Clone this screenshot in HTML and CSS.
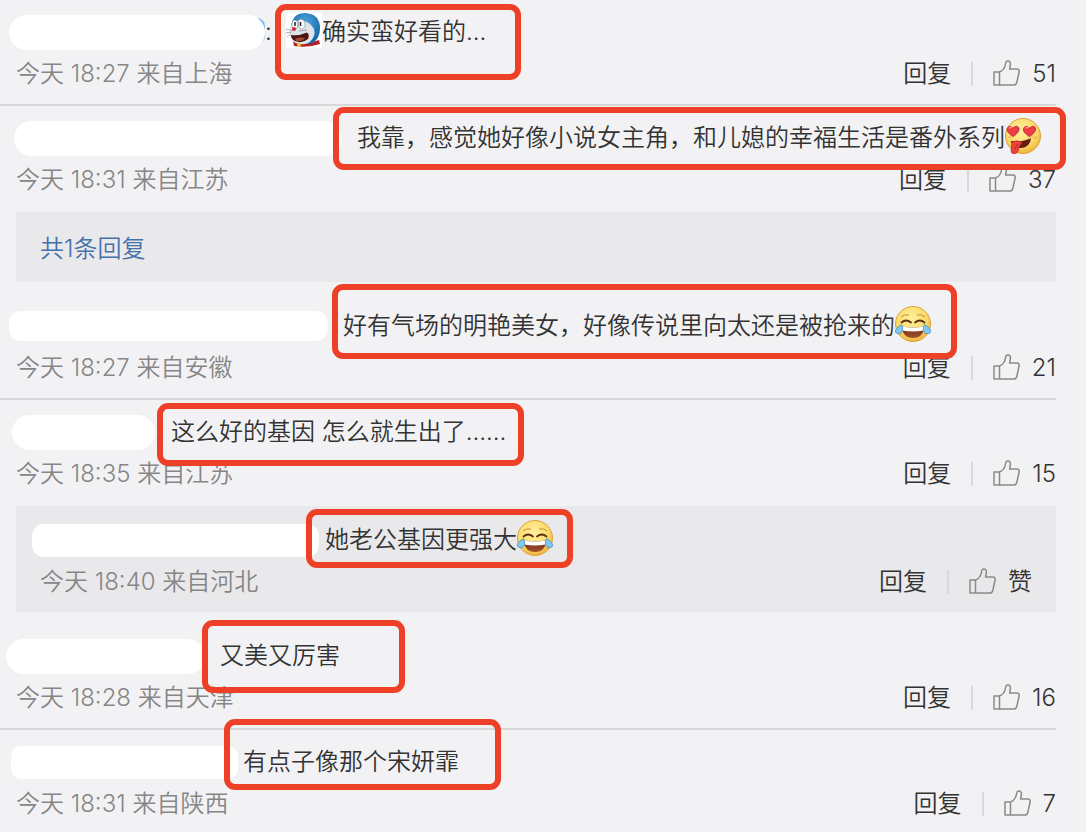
FILE: index.html
```html
<!DOCTYPE html>
<html lang="zh-CN">
<head>
    <meta charset="UTF-8">
    <meta name="viewport" content="width=device-width, initial-scale=1.0">
    <title>评论</title>
    <link rel="stylesheet" href="styles.css">
</head>
<body>
    <!-- Shared icons -->
    <svg class="sprite" width="0" height="0">
        <defs>
            <radialGradient id="face" cx="45%" cy="35%" r="65%">
                <stop offset="0" stop-color="#fff0a0"/>
                <stop offset="0.65" stop-color="#fbdc6c"/>
                <stop offset="1" stop-color="#eeb43c"/>
            </radialGradient>
            <radialGradient id="blue" cx="50%" cy="30%" r="65%">
                <stop offset="0" stop-color="#4ba3da"/>
                <stop offset="1" stop-color="#1467a8"/>
            </radialGradient>
            <linearGradient id="mouth" x1="0" y1="0" x2="0" y2="1">
                <stop offset="0" stop-color="#6b2a16"/>
                <stop offset="1" stop-color="#a4512b"/>
            </linearGradient>
        </defs>
        <symbol id="icon-like" viewBox="0 0 27 26">
            <path d="M1 12h5.500v13H1zM6.500 12c3.500-1.500 5.500-4 6-8 .2-2 1-3 2.200-3 2 0 3 1.400 2.700 3.500L16.600 9h7.200c1.800 0 2.700 1.200 2.300 3l-2.300 10.500c-.4 1.700-1.300 2.500-3 2.500H6.500"/>
        </symbol>
        <symbol id="emoji-joy" viewBox="0 0 36 36">
            <circle cx="18" cy="18" r="17.500" fill="url(#face)" stroke="#dda13a"/>
            <path d="M6 11q3-3 8-2M30 11q-3-3-8-2" fill="none" stroke="#c98a2e" stroke-width="1"/>
            <path d="M6.500 16.500q4.500-4 9.500 0M20 16.500q5-4 9.500 0" fill="none" stroke="#5e3011" stroke-width="1.800" stroke-linecap="round"/>
            <path d="M6.500 20.500q11.500 2 23 0Q28 32 18 32T6.500 20.500z" fill="url(#mouth)"/>
            <path d="M6.500 20.500q11.500 2 23 0l-.8 4q-10.700 2-21.400 0z" fill="#fff"/>
            <path d="M6.500 18.500Q9 24 6 27q-3 2-5.300-.5Q-1 23 6.500 18.500zM29.500 18.500Q27 24 30 27q3 2 5.300-.5Q37 23 29.500 18.500z" fill="#83c8f0" stroke="#4191c8" stroke-width=".8"/>
        </symbol>
        <symbol id="emoji-love" viewBox="0 0 36 36">
            <circle cx="18" cy="18" r="17.500" fill="url(#face)" stroke="#dda13a"/>
            <path d="M4 20q3-3 7-3M23 20q5-2 9 0" fill="none" stroke="#f3a45b" stroke-width="3" opacity=".4"/>
            <path d="M8 18.500Q1 14 2.200 10.500 4 6.500 8 10q4-3.500 6 0Q15 14 8 18.500zM24.500 18.500Q17 14 18.500 10.500q2-4 6-.5 4-3.500 6 0Q31.500 14 24.500 18.500z" fill="#ee3c45" stroke="#c51f31" stroke-width=".8"/>
            <path d="M4 10.500q1.500-2 3-.5M20.300 10.500q1.500-2 3-.5" fill="none" stroke="#ff989c" stroke-width="1.200"/>
            <path d="M5.500 23q10 1.500 20.500-2.500-1 9-10 9.500-7 0-10.500-7z" fill="#651c12"/>
            <path d="M7 24q6-2.500 10 .5l-3 4.500q-1 7-4.500 7-4.500-.5-3-6z" fill="#e9473d" stroke="#b92222" stroke-width=".8"/>
            <path d="M12.500 26l-3 6" stroke="#b92222" stroke-width=".9"/>
        </symbol>
        <symbol id="emoji-doraemon" viewBox="0 0 36 36">
            <path d="M0 0h36v36H0z" fill="#fff"/>
            <path d="M7 28q12 6 26 0l1 4q-12 4-26 2z" fill="#b51d24"/>
            <path d="M5 14Q7 1 19 1q15 1 15 15 0 10-7 15-9 2-17 0Q5 27 5 14z" fill="url(#blue)"/>
            <path d="M4 16q1-5 6-7 9-2 15 4 5 5 3 11-3 7-9 8-8 1-12-3-4-5-3-13z" fill="#dfe4e8"/>
            <path d="M7 8.500q4-2 4.500 3.500T8.500 17Q4 16 7 8.500zM13 7.500q5-1.500 6 4t-3.500 5.500q-4.500-1-2.500-9.500z" fill="#fff" stroke="#71838f" stroke-width=".6"/>
            <path d="M9 10v4M14.500 10v4" stroke="#1a1a1a" stroke-width="1.500"/>
            <circle cx="8" cy="17" r="2" fill="#db2530"/>
            <path d="M5 23q8 1 16-2.500 3 2 1 6.500-6 5-13 2-4-2-4-6z" fill="#4b1610"/>
            <path d="M9 27q5-2.500 10-.5-4 3.500-8.500 2.500z" fill="#a5492f"/>
            <path d="M0 17l6 1.500M0 21l6-1M1 25l4-3M13 19l8-1" stroke="#777" stroke-width=".6"/>
            <circle cx="13" cy="33" r="2" fill="#f1c33a"/>
        </symbol>
    </svg>

    <ul class="comments">
        <li class="comment divided">
            <div class="line">
                <span class="name name-1"></span><span class="colon">:</span>
                <p class="text"><svg class="emoji"><use href="#emoji-doraemon"/></svg>确实蛮好看的...<span class="mark mark-1"></span></p>
            </div>
            <div class="meta">
                <span class="info">今天 18:27 来自上海</span>
                <button class="reply-btn" type="button">回复</button>
                <button class="like-btn" type="button"><svg class="thumb"><use href="#icon-like"/></svg>51</button>
            </div>
        </li>

        <li class="comment">
            <div class="line">
                <span class="name name-2"></span>
                <p class="text">我靠，感觉她好像小说女主角，和儿媳的幸福生活是番外系列<svg class="emoji"><use href="#emoji-love"/></svg><span class="mark mark-2"></span></p>
            </div>
            <div class="meta">
                <span class="info">今天 18:31 来自江苏</span>
                <button class="reply-btn" type="button">回复</button>
                <button class="like-btn" type="button"><svg class="thumb"><use href="#icon-like"/></svg>37</button>
            </div>
            <div class="replies more">
                <a href="#">共1条回复</a>
            </div>
        </li>

        <li class="comment divided">
            <div class="line">
                <span class="name name-3"></span>
                <p class="text">好有气场的明艳美女，好像传说里向太还是被抢来的<svg class="emoji"><use href="#emoji-joy"/></svg><span class="mark mark-3"></span></p>
            </div>
            <div class="meta">
                <span class="info">今天 18:27 来自安徽</span>
                <button class="reply-btn" type="button">回复</button>
                <button class="like-btn" type="button"><svg class="thumb"><use href="#icon-like"/></svg>21</button>
            </div>
        </li>

        <li class="comment">
            <div class="line">
                <span class="name name-4"></span>
                <p class="text">这么好的基因 怎么就生出了……<span class="mark mark-4"></span></p>
            </div>
            <div class="meta">
                <span class="info">今天 18:35 来自江苏</span>
                <button class="reply-btn" type="button">回复</button>
                <button class="like-btn" type="button"><svg class="thumb"><use href="#icon-like"/></svg>15</button>
            </div>
            <div class="replies">
                <div class="line">
                    <span class="name name-5"></span>
                    <p class="text">她老公基因更强大<svg class="emoji"><use href="#emoji-joy"/></svg><span class="mark mark-5"></span></p>
                </div>
                <div class="meta">
                    <span class="info">今天 18:40 来自河北</span>
                    <button class="reply-btn" type="button">回复</button>
                    <button class="like-btn" type="button"><svg class="thumb"><use href="#icon-like"/></svg>赞</button>
                </div>
            </div>
        </li>

        <li class="comment divided">
            <div class="line">
                <span class="name name-6"></span>
                <p class="text">又美又厉害<span class="mark mark-6"></span></p>
            </div>
            <div class="meta">
                <span class="info">今天 18:28 来自天津</span>
                <button class="reply-btn" type="button">回复</button>
                <button class="like-btn" type="button"><svg class="thumb"><use href="#icon-like"/></svg>16</button>
            </div>
        </li>

        <li class="comment last">
            <div class="line">
                <span class="name name-7"></span>
                <p class="text">有点子像那个宋妍霏<span class="mark mark-7"></span></p>
            </div>
            <div class="meta">
                <span class="info">今天 18:31 来自陕西</span>
                <button class="reply-btn" type="button">回复</button>
                <button class="like-btn" type="button"><svg class="thumb"><use href="#icon-like"/></svg>7</button>
            </div>
        </li>
    </ul>
</body>
</html>
```
FILE: styles.css
```css
:root {
    --bg-color: #f2f2f4;
    --reply-bg: #e9e9eb;
    --line-color: #d9d9db;
    --text-color: #333333;
    --muted-color: #868686;
    --link-color: #4571ab;
    --mark-color: #ee4026;
}

* {
    margin: 0;
    padding: 0;
    box-sizing: border-box;
}

body {
    font-family: Inter, "Noto Sans CJK SC", sans-serif;
    font-size: 24px;
    font-weight: 350;
    line-height: 36px;
    color: var(--text-color);
    background-color: var(--bg-color);
}

.sprite {
    position: absolute;
}

.comments {
    list-style: none;
    margin-right: 30px;
}

.comment {
    padding: 14px 0 12px 16px;
}

.comment.divided {
    border-bottom: 2px solid var(--line-color);
}

.comment.last {
    padding-bottom: 0;
}

.line {
    display: flex;
    align-items: center;
    height: 36px;
}

.text {
    position: relative;
    height: 36px;
    white-space: nowrap;
}

.emoji {
    width: 36px;
    height: 36px;
    vertical-align: top;
    margin-top: -2px;
}

.meta {
    display: flex;
    align-items: center;
    margin-top: 6px;
}

.info {
    flex: 1;
    color: var(--muted-color);
}

button {
    font: inherit;
    color: inherit;
    background: none;
    border: none;
    cursor: pointer;
}

.like-btn {
    display: flex;
    align-items: center;
    gap: 12px;
    margin-left: 20px;
}

.like-btn::before {
    content: "";
    width: 2px;
    height: 24px;
    margin-right: 8px;
    background-color: var(--line-color);
}

.thumb {
    width: 27px;
    height: 26px;
    margin-top: -2px;
    fill: none;
    stroke: #8a8a8a;
    stroke-width: 1.5;
    stroke-linejoin: round;
}

.replies {
    margin-top: 14px;
    padding: 16px 24px 12px;
    background-color: var(--reply-bg);
}

.replies.more {
    padding: 19px 24px 15px;
}

.replies a {
    display: block;
    color: var(--link-color);
    text-decoration: none;
}

/* Hidden user names */
.name {
    flex-shrink: 0;
    height: 35px;
    border-radius: 18px;
    background-color: #ffffff;
}

.name-1 {
    position: relative;
    width: 256px;
    margin-left: -7px;
    isolation: isolate;
    background: none;
}

.name-1::before,
.name-1::after {
    content: "";
    position: absolute;
    inset: 0;
    border-radius: 18px;
    background-color: #ffffff;
}

.name-1::before {
    inset: 3px 0 6px auto;
    width: 16px;
    border-radius: 8px;
    background-color: #8abaf5;
}

.colon {
    width: 21px;
}

.name-2 {
    width: 328px;
    margin: 0 15px 0 -2px;
}

.name-3 {
    width: 319px;
    height: 30px;
    margin: 0 15px 0 -7px;
    border-radius: 12px;
}

.name-4 {
    width: 143px;
    margin: 0 16px 0 -4px;
}

.name-5 {
    width: 287px;
    height: 33px;
    margin: 0 6px 0 -8px;
    border-radius: 12px;
}

.name-6 {
    width: 199px;
    margin: 0 15px 0 -10px;
}

.name-7 {
    width: 227px;
    height: 33px;
    margin: 0 5px 0 -5px;
    border-radius: 10px;
}

/* Red frames drawn over the comments */
.mark {
    position: absolute;
    z-index: 1;
    border: 6px solid var(--mark-color);
    border-radius: 11px;
    pointer-events: none;
}

.mark-1 {
    top: -10px;
    left: -11px;
    width: 246px;
    height: 76px;
}

.mark-2 {
    top: -13px;
    left: -24px;
    width: 733px;
    height: 63px;
}

.mark-3 {
    top: -24px;
    left: -11px;
    width: 625px;
    height: 75px;
}

.mark-4 {
    top: -11px;
    left: -14px;
    width: 367px;
    height: 63px;
}

.mark-5 {
    top: -13px;
    left: -19px;
    width: 267px;
    height: 59px;
}

.mark-6 {
    top: -18px;
    left: -18px;
    width: 203px;
    height: 73px;
}

.mark-7 {
    top: -25px;
    left: -19px;
    width: 277px;
    height: 71px;
}
```
